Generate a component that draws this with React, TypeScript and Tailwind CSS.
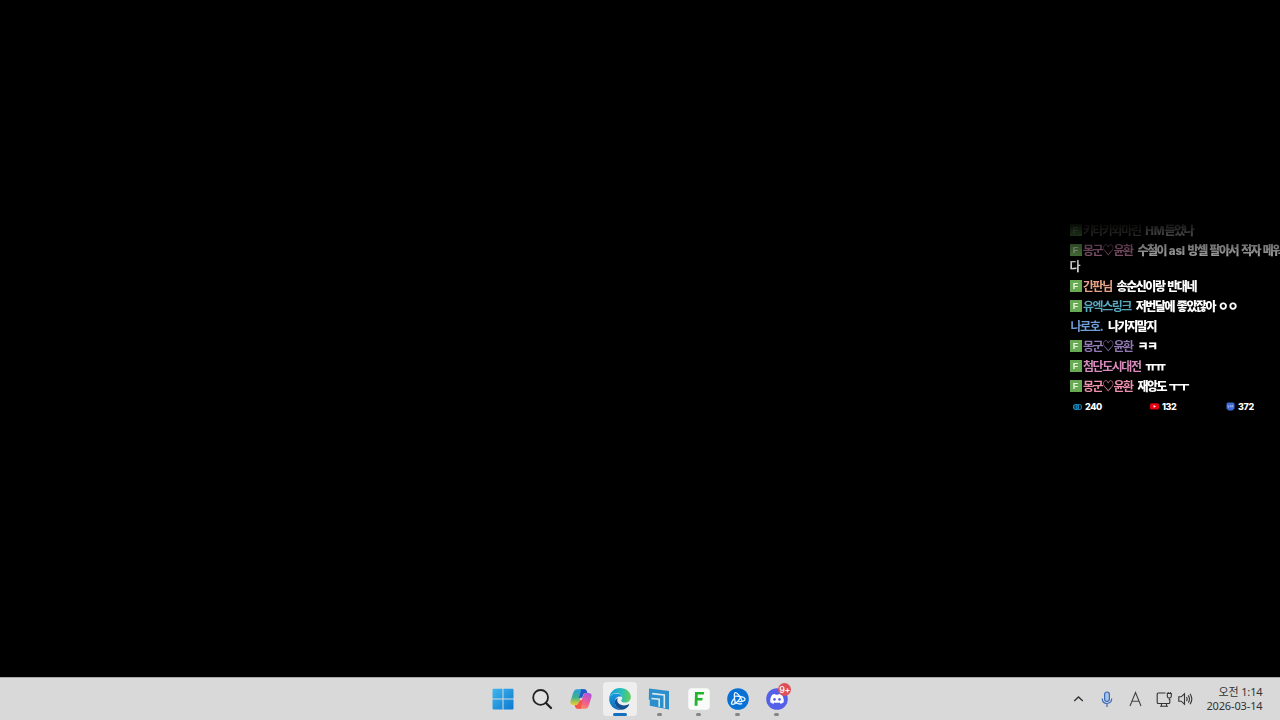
import React from 'react';

interface ChatMessage {
  name: string;
  color: string;
  text: string;
  badge?: boolean;
}

const messages: ChatMessage[] = [
  { name: '키타카와마린', color: 'text-[#8d8a80]', text: 'HM듣었나', badge: true },
  { name: '몽군♡윤환', color: 'text-[#c87fa6]', text: '수철이 asl 방셀 팔아서 적자 메워', badge: true },
  { name: '간판님', color: 'text-[#e8a287]', text: '송순신이랑 반대네', badge: true },
  { name: '유엑스링크', color: 'text-[#57a9c0]', text: '저번달에 좋았잖아 ㅇㅇ', badge: true },
  { name: '나로호.', color: 'text-[#6f9fd8]', text: '나가지말지' },
  { name: '몽군♡윤환', color: 'text-[#9079b5]', text: 'ㅋㅋ', badge: true },
  { name: '첨단도시대전', color: 'text-[#d88bbd]', text: 'ㅠㅠ', badge: true },
  { name: '몽군♡윤환', color: 'text-[#ee8fae]', text: '재앙도 ㅜㅜ', badge: true },
];

const FanBadge = () => (
  <span className="ml-[0.5px] mr-[1.5px] flex h-[12px] w-[12px] shrink-0 items-center justify-center bg-[#68a954] font-['Liberation_Sans'] text-[9px] font-bold leading-none tracking-normal text-[#e5f5dc]">
    F
  </span>
);

// Latin letters and the heart keep looser spacing than Hangul
const Spaced = ({ text }: { text: string }) => (
  <>
    {text.split(/([A-Za-z]+|♡|\.)/).map((part, i) => {
      if (part === '♡') return <span key={i} className="font-medium tracking-[-0.8px]">♡</span>;
      if (/^[A-Za-z]+$/.test(part)) {
        return (
          <span key={i} className="font-['Inter'] text-[11.5px] leading-none tracking-[-0.2px]">
            {part}
          </span>
        );
      }
      if (part === '.') return <span key={i} className="ml-[0.5px] tracking-[-0.4px]">.</span>;
      return part;
    })}
  </>
);

const Chat = () => (
  <div className="ml-[1069px] w-[211px] overflow-hidden font-['Noto_Sans_CJK_KR',sans-serif] text-[12px] tracking-[-1.45px] [word-spacing:1.4px]">
    <div className="[mask-image:linear-gradient(to_bottom,transparent_-2px,black_56px)]">
      {messages.map((m, i) => (
        <div key={i} className="mb-[4px]">
          <div className="flex h-[16px] items-center whitespace-nowrap leading-[16px]">
            {m.badge ? <FanBadge /> : <span className="w-[1.5px]" />}
            <span className={`mr-[4.8px] font-bold ${m.color}`}>
              <Spaced text={m.name} />
            </span>
            <span className="font-extrabold text-white">
              <Spaced text={m.text} />
            </span>
          </div>
          {i === 1 && <div className="h-[16px] pl-[0.5px] font-bold leading-[15px] text-white">다</div>}
        </div>
      ))}
    </div>
    <div className="flex h-[17px] items-center font-['Inter',sans-serif] text-[9px] font-extrabold tracking-[-0.4px] text-white">
      <div className="ml-[4px] flex w-[77px] items-center gap-[3px]">
        <svg width="9" height="8" viewBox="0 0 9 8" fill="none">
          <rect x="0.6" y="1.5" width="5" height="5" rx="2" fill="#0d4058" stroke="#168fc5" strokeWidth="1.2" />
          <rect x="3.4" y="1.5" width="5" height="5" rx="2" stroke="#1679a8" strokeWidth="1.2" />
        </svg>
        <span>240</span>
      </div>
      <div className="flex w-[76px] items-center gap-[3px]">
        <svg width="9" height="8" viewBox="0 0 9 8">
          <rect y="0.2" width="9" height="6.400" rx="1.600" fill="#e60012" />
          <path d="M3.600 2 6 3.400 3.600 4.800Z" fill="#fff" />
        </svg>
        <span>132</span>
      </div>
      <div className="flex items-center gap-[3px]">
        <svg width="9" height="9" viewBox="0 0 9 9">
          <path d="M1.500.5h6l1 1.300v4.700L6.500 8.500h-4l-2-2V1.800Z" fill="#4169d8" />
          <path d="M2 3v2.200h1.200M4 5.200V3.600h1v1.600M6 5.200V3.600h1v1.600" stroke="#bfd0ff" strokeWidth=".6" fill="none" />
        </svg>
        <span>372</span>
      </div>
    </div>
  </div>
);

const WindowsIcon = () => (
  <svg width="22" height="22" viewBox="0 0 22 22">
    <defs>
      <linearGradient id="win" x1="0" y1="0" x2="22" y2="22" gradientUnits="userSpaceOnUse">
        <stop stopColor="#43b8ee" />
        <stop offset="1" stopColor="#0878d0" />
      </linearGradient>
    </defs>
    <path d="M1.500.8h9v9.700h-10V1.800q0-1 1-1ZM11.500.8h9q1 0 1 1v8.700h-10ZM.5 11.500h10v10h-9q-1 0-1-1ZM11.500 11.500h10v9q0 1-1 1h-9Z" fill="url(#win)" />
  </svg>
);

const SearchIcon = () => (
  <svg width="22" height="22" viewBox="0 0 22 22" fill="none" stroke="#222">
    <circle cx="9.600" cy="9.400" r="7.400" strokeWidth="1.800" fill="#e2e2e2" />
    <path d="m15 15 5 5" strokeWidth="2.300" strokeLinecap="round" />
  </svg>
);

const CopilotIcon = () => (
  <svg width="22" height="22" viewBox="0 0 22 22">
    <defs>
      <linearGradient id="cpA" x1="5" y1="1" x2="5" y2="17" gradientUnits="userSpaceOnUse">
        <stop stopColor="#2a9fe0" />
        <stop offset=".5" stopColor="#3daf94" />
        <stop offset="1" stopColor="#f0cf26" />
      </linearGradient>
      <linearGradient id="cpB" x1="18" y1="5" x2="10" y2="21" gradientUnits="userSpaceOnUse">
        <stop stopColor="#ad55dc" />
        <stop offset=".5" stopColor="#ec5b98" />
        <stop offset="1" stopColor="#ff9250" />
      </linearGradient>
    </defs>
    <path d="M14 1.200H7C4.900 1.200 3.800 2.800 3.200 4.800L.7 12.500c-.9 3 .3 4.500 2.600 4.500h2.400c2 0 2.600-1.200 3.200-3L12 5c.6-1.700 1.300-2.400 3.400-2.400Z" fill="url(#cpA)" />
    <path d="M8 20.800h7c2.100 0 3.200-1.600 3.800-3.600l2.500-7.700c.9-3-.3-4.500-2.600-4.500h-2.400c-2 0-2.600 1.200-3.200 3L10 17c-.6 1.700-1.300 2.400-3.400 2.400Z" fill="url(#cpB)" />
    <path d="M10.500 1.200h4c1.800 0 2.300 1.600 2.900 3.800h-1.700c-1.800 0-2.300 1.200-2.800 2.800l-.7 2H8.800l1.900-5.700c.4-1.200.2-2.500-.2-2.900Z" fill="#2358c7" />
    <path d="M11.500 20.800h-4c-1.800 0-2.300-1.600-2.900-3.800h1.200c1.900 0 2.500-1.200 3-2.800l.7-2h3.700L11.300 18c-.4 1.200-.2 2.400.2 2.800Z" fill="#f3574c" />
  </svg>
);

const EdgeIcon = () => (
  <svg width="22" height="22" viewBox="0 0 22 22">
    <defs>
      <linearGradient id="edA" x1="1" y1="7" x2="22" y2="8" gradientUnits="userSpaceOnUse">
        <stop stopColor="#159bd7" />
        <stop offset=".55" stopColor="#29bfbb" />
        <stop offset="1" stopColor="#64cf4c" />
      </linearGradient>
      <linearGradient id="edB" x1="3" y1="7" x2="8" y2="21" gradientUnits="userSpaceOnUse">
        <stop stopColor="#1597dc" />
        <stop offset="1" stopColor="#1268bb" />
      </linearGradient>
    </defs>
    <path d="M.2 11C.2 4.800 5 0 11 0c6.500 0 10.800 4.200 10.800 8.900 0 3.400-2.600 5.600-5.800 5.600-2.500 0-3.800-.8-3.800-1.600 0-.6 1-1 1-2.800C13.200 7.200 10.600 5 7.300 5 3.600 5 .7 7.200.2 11Z" fill="url(#edA)" />
    <path d="M.2 11C.5 7.600 3.800 5.600 7 5.600c3.800 0 5.500 1.800 6 3.400-4.400-1.700-7.500 1.500-7.100 5.400.3 3.500 3 6.800 6.500 7.400C5.500 22.600.2 17.500.2 11Z" fill="url(#edB)" />
    <path d="M9 10.100C7.500 11.500 7.700 17.200 15 17.500c2 0 3.400-.7 4.500-1.200.5-.2.900.2.600.7C18.500 20 15.600 21.800 12.400 21.800 8.700 21.200 6 17.900 5.800 14.300 5.600 12.100 7.100 10.400 9 10.100Z" fill="#144f91" />
  </svg>
);

const StepsIcon = () => (
  <svg width="22" height="22" viewBox="0 0 22 22" fill="none">
    <path d="M1 .5 21 3v18.500L1.800 17.800V12L.8 11.500Z" fill="#2a8fca" />
    <path d="M4.200 5.600 16.300 6.900v13M3.400 10.500l7.800.8v7.500" stroke="#dce8ef" strokeWidth="1.600" />
  </svg>
);

const FIcon = () => (
  <svg width="22" height="22" viewBox="0 0 22 22">
    <rect x=".3" y=".3" width="21.400" height="21.400" rx="3.500" fill="#f9fbf9" />
    <path d="M7 4H16.200l-.4 2.600H9.700v3.300h5l-.4 2.500H9.500v5.300H6.600Z" fill="#20b52c" />
  </svg>
);

const BattleNetIcon = () => (
  <svg width="22" height="22" viewBox="0 0 22 22" fill="none" stroke="#eaf7ff" strokeWidth="1.300">
    <circle cx="11" cy="11" r="10.800" fill="#0871d6" stroke="none" />
    <path d="M8.300 14.500C7 9.800 6.900 4.700 8.500 4.700c1.900 0 5.300 4.400 6.700 8.800" />
    <path d="M7.200 8.300c4.300-.5 10.600.6 10.800 2.900.1 1.600-3.200 2.500-6.800 2.500" />
    <path d="M14 8.700c-1.800 4.200-6.400 8.300-8.800 7.700-1.800-.5.200-4.100 2.600-6.200" />
    <path d="M7.500 14.300c2.600 1.600 5 2.100 7.700 1.400" />
  </svg>
);

const DiscordIcon = () => (
  <svg width="22" height="22" viewBox="0 0 22 22">
    <circle cx="11" cy="11" r="10.800" fill="#5560e8" />
    <path d="M6.200 6.800c1-.6 2-.9 3-.9l.4.800c.9-.1 1.900-.1 2.800 0l.4-.8c1 .1 2 .4 3 .9 1.600 2.300 2.200 4.800 1.900 7.500-1 .8-2.100 1.200-3.300 1.500l-.8-1.300c-1.700.4-3.500.4-5.200 0l-.8 1.300c-1.200-.3-2.300-.8-3.300-1.500-.3-2.700.3-5.200 1.900-7.500Z" fill="#fff" />
    <ellipse cx="8.500" cy="11.400" rx="1.300" ry="1.400" fill="#5560e8" />
    <ellipse cx="13.500" cy="11.400" rx="1.300" ry="1.400" fill="#5560e8" />
  </svg>
);

const apps = [
  { icon: <WindowsIcon />, running: false },
  { icon: <SearchIcon />, running: false },
  { icon: <CopilotIcon />, running: false },
  { icon: <EdgeIcon />, running: false, active: true },
  { icon: <StepsIcon />, running: true },
  { icon: <FIcon />, running: true },
  { icon: <BattleNetIcon />, running: true },
  { icon: <DiscordIcon />, running: true, count: '9+' },
];

const Tray = () => (
  <div className="flex w-[210px] items-center text-[#333]">
    <svg className="ml-[3px]" width="11" height="8" viewBox="0 0 11 8" fill="none" stroke="#303030" strokeWidth="1.300">
      <path d="M1.200 6 5.500 2l4.300 4" />
    </svg>
    <svg className="ml-[17px]" width="12" height="17" viewBox="0 0 12 17" fill="none" stroke="#3c6bb8" strokeWidth="1.200">
      <rect x="3.600" y="1" width="4.800" height="9.500" rx="2.400" fill="#a9c4e8" />
      <path d="M1.300 7.500c0 3.200 1.800 5 4.700 5s4.700-1.800 4.700-5M6 12.500V16" />
    </svg>
    <svg className="ml-[16px]" width="13" height="16" viewBox="0 0 13 16" fill="none" stroke="#444" strokeWidth="1.100">
      <path d="M1 15 6.500 1.500 12 15M3 10.300h7" />
    </svg>
    <svg className="ml-[14px]" width="17" height="17" viewBox="0 0 17 17" fill="none" stroke="#333" strokeWidth="1.100">
      <path d="M9.500 2H2.200Q1.200 2 1.200 3v8.500q0 1 1 1h10.600q1 0 1-1V8M5.500 12.500V15M10.500 12.500V15M4 15.200h8" />
      <path d="M11.300 2.500h4v2.700q0 1.800-2 1.800t-2-1.800ZM12.200 1v1.500M14.400 1v1.500M13.300 7v2" />
    </svg>
    <svg className="ml-[4.5px]" width="15" height="14" viewBox="0 0 15 14" fill="none" stroke="#333" strokeWidth="1.100">
      <path d="M.8 4.800h2.400L6.500 1.800v10.400L3.200 9.200H.8Z" />
      <path d="M8.500 5q1.200 2 0 4M10.300 3.400q2.300 3.600 0 7.200M12 1.700q3.700 5.300 0 10.600" />
    </svg>
    <div className="mb-[1px] ml-auto mr-[17.500px] text-right font-['Noto_Sans','Noto_Sans_CJK_KR',sans-serif] text-[11px] leading-[14px] tracking-[-0.13px]">
      <div>오전 1:14</div>
      <div>2026-03-14</div>
    </div>
  </div>
);

const Taskbar = () => (
  <footer className="flex h-[43px] justify-between border-t border-[#aaa] bg-[#d9d9d9]">
    <div className="flex pl-[483.500px]">
      {apps.map((app, i) => (
        <div key={i} className="flex w-[39.100px] justify-center pt-[4px]">
          <div
            className={`relative flex h-[34px] w-[34px] items-center justify-center rounded-[4px] ${
              app.active ? 'bg-[#eeeeee]' : ''
            }`}
          >
            {app.icon}
            {app.active && <span className="absolute bottom-0 h-[3px] w-[14px] rounded-full bg-[#1670c0]" />}
            {app.running && <span className="absolute bottom-0 h-[3px] w-[5px] rounded-full bg-[#858585]" />}
            {app.count && (
              <span className="absolute left-[18.500px] top-[1px] flex h-[13px] w-[13px] items-center justify-center rounded-full bg-[#df4f57] font-['Inter'] text-[9px] font-medium leading-none tracking-[-0.5px] text-white">
                {app.count}
              </span>
            )}
          </div>
        </div>
      ))}
    </div>
    <Tray />
  </footer>
);

export default function App() {
  return (
    <div className="flex h-[720px] w-[1280px] flex-col overflow-hidden bg-black">
      <main className="flex-1 pt-[222px]">
        <Chat />
      </main>
      <Taskbar />
    </div>
  );
}
